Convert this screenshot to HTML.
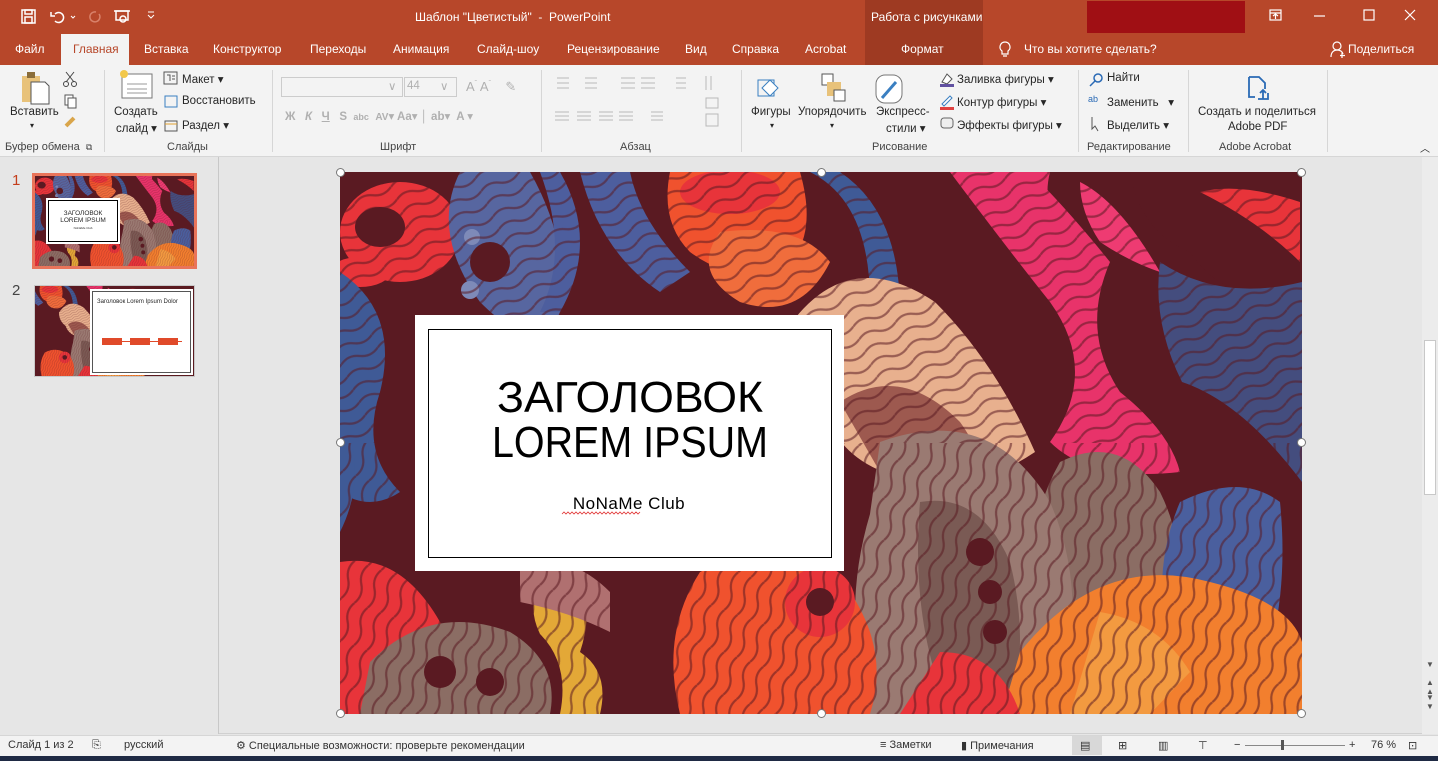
<!DOCTYPE html>
<html><head><meta charset="utf-8"><style>
*{box-sizing:border-box;margin:0;padding:0}
body{width:1438px;height:761px;overflow:hidden;background:#e6e6e6;font-family:"Liberation Sans","DejaVu Sans",sans-serif;font-size:12px;color:#262626;position:relative}
.abs{position:absolute}
#title{left:0;top:0;width:1438px;height:65px;background:#b7472a}
.tt{color:#fff;font-size:12px;position:absolute;white-space:nowrap}
.tab{color:#fff;font-size:12px;position:absolute;top:42px;white-space:nowrap}
#ribbon{left:0;top:65px;width:1438px;height:92px;background:#f3f3f3;border-bottom:1px solid #d6d6d6}
.rt{position:absolute;font-size:11.5px;color:#262626;white-space:nowrap}
.gl{position:absolute;top:141px;font-size:11px;color:#444;white-space:nowrap}
.sep{position:absolute;top:70px;width:1px;height:82px;background:#d6d6d6}
.dis{color:#b0b0b0}
.st{position:absolute;top:739px;font-size:11px;color:#333;white-space:nowrap}
.h{position:absolute;width:9px;height:9px;border-radius:50%;background:#fff;border:1px solid #777}
</style></head><body>
<div id="title" class="abs"></div>
<div class="abs" style="left:865px;top:0;width:118px;height:65px;background:#9e3a22"></div>
<div class="abs" style="left:1087px;top:1px;width:158px;height:32px;background:#a00f14"></div>
<svg class="abs" style="left:18px;top:6px" width="150" height="22" viewBox="0 0 150 22" fill="none" stroke="#fff" stroke-width="1.5">
<rect x="4" y="4" width="13" height="13"/><rect x="7" y="4" width="7" height="4"/><rect x="7" y="11" width="7" height="6"/>
<path d="M37 8 a5 5 0 1 1 0 7 M33 6 v4 h4"/><path d="M53 10 l2 2 l2-2" stroke-width="1"/>
<path d="M78 6 a5 5 0 1 0 3 2" stroke="#d9826b"/>
<rect x="98" y="5" width="12" height="9"/><circle cx="105" cy="13" r="3"/><path d="M96 5h16"/>
<path d="M130 9 l3 3 l3-3 M130 6h6" stroke-width="1"/>
</svg>
<div class="tt" style="left:415px;top:10px">Шаблон "Цветистый"&nbsp; -&nbsp; PowerPoint</div>
<div class="tt" style="left:871px;top:10px">Работа с рисунками</div>
<svg class="abs" style="left:1262px;top:6px" width="170" height="20" fill="none" stroke="#fff" stroke-width="1.2">
<rect x="8" y="4" width="11" height="10"/><path d="M8 7h11 M13.5 13v-5 M11 10l2.5-2 2.5 2"/>
<path d="M52 10h11"/><rect x="102" y="4" width="10" height="10"/><path d="M143 4l10 10 M153 4l-10 10"/>
</svg>
<div class="abs" style="left:61px;top:34px;width:68px;height:32px;background:#f3f3f3"></div>
<div class="tab" style="left:15px">Файл</div>
<div class="tab" style="left:73px;color:#b7472a">Главная</div>
<div class="tab" style="left:144px">Вставка</div>
<div class="tab" style="left:213px">Конструктор</div>
<div class="tab" style="left:310px">Переходы</div>
<div class="tab" style="left:393px">Анимация</div>
<div class="tab" style="left:477px">Слайд-шоу</div>
<div class="tab" style="left:567px">Рецензирование</div>
<div class="tab" style="left:685px">Вид</div>
<div class="tab" style="left:732px">Справка</div>
<div class="tab" style="left:805px">Acrobat</div>
<div class="tab" style="left:901px">Формат</div>
<svg class="abs" style="left:998px;top:40px" width="14" height="18" fill="none" stroke="#fff" stroke-width="1.2"><path d="M7 2a5 5 0 0 0-3 9v3h6v-3a5 5 0 0 0-3-9z M5 16h4"/></svg>
<div class="tab" style="left:1024px">Что вы хотите сделать?</div>
<svg class="abs" style="left:1330px;top:40px" width="16" height="18" fill="none" stroke="#fff" stroke-width="1.2"><circle cx="7" cy="6" r="4"/><path d="M1 17c0-5 3-7 6-7s5 1 6 4 M12 13v5 M10 15.5h5"/></svg>
<div class="tab" style="left:1348px">Поделиться</div>
<div id="ribbon" class="abs"></div>
<div class="sep" style="left:104px"></div><div class="sep" style="left:272px"></div><div class="sep" style="left:541px"></div><div class="sep" style="left:741px"></div><div class="sep" style="left:1078px"></div><div class="sep" style="left:1188px"></div><div class="sep" style="left:1327px"></div>
<svg class="abs" style="left:20px;top:70px" width="80" height="62">
<rect x="2" y="6" width="18" height="26" fill="#e8c27a"/><rect x="7" y="2" width="8" height="6" fill="#8a6d3a"/><path d="M11 12h14l4 4v18h-18z" fill="#fff" stroke="#555"/>
<path d="M46 2l8 10 M54 2l-8 10" stroke="#444"/><circle cx="46" cy="14" r="2.5" fill="none" stroke="#444"/><circle cx="54" cy="14" r="2.5" fill="none" stroke="#444"/>
<rect x="45" y="25" width="8" height="10" fill="#fff" stroke="#555"/><rect x="48" y="28" width="8" height="10" fill="#fff" stroke="#555"/>
<path d="M46 56l8-8" stroke="#d9a54a" stroke-width="4"/>
</svg>
<div class="rt" style="left:10px;top:106px">Вставить</div><div class="rt" style="left:30px;top:121px;font-size:8px">▾</div>
<svg class="abs" style="left:118px;top:70px" width="40" height="30"><rect x="4" y="4" width="30" height="24" fill="#fff" stroke="#777"/><path d="M9 14h20M9 19h20M9 23h20" stroke="#999"/><circle cx="6" cy="4" r="4" fill="#f2c84b"/></svg>
<div class="rt" style="left:114px;top:106px">Создать</div><div class="rt" style="left:116px;top:121px">слайд ▾</div>
<svg class="abs" style="left:163px;top:71px" width="16" height="64" fill="none" stroke="#555"><rect x="1" y="1" width="13" height="12"/><path d="M4 4h3v6 M9 5h3 M9 8h3"/><rect x="2" y="25" width="12" height="11" stroke="#3a7fc1"/><rect x="2" y="50" width="12" height="10"/><path d="M2 53h12" stroke="#e0a030"/></svg>
<div class="rt" style="left:182px;top:72px">Макет ▾</div>
<div class="rt" style="left:182px;top:95px">Восстановить</div>
<div class="rt" style="left:182px;top:118px">Раздел ▾</div>
<div class="abs" style="left:281px;top:77px;width:122px;height:20px;border:1px solid #ccc;background:#f3f3f3"></div>
<div class="abs" style="left:404px;top:77px;width:53px;height:20px;border:1px solid #ccc;background:#f3f3f3"></div>
<div class="rt dis" style="left:407px;top:80px">44</div>
<div class="rt dis" style="left:388px;top:79px">∨</div><div class="rt dis" style="left:440px;top:79px">∨</div>
<div class="rt dis" style="left:466px;top:79px;font-size:13px">A<sup style="font-size:7px">ˆ</sup> A<sup style="font-size:7px">ˇ</sup>&nbsp;&nbsp;&nbsp;&nbsp;✎</div>
<div class="rt dis" style="left:285px;top:109px;font-weight:bold;letter-spacing:0">Ж&nbsp;&nbsp; <i>К</i>&nbsp;&nbsp; <u>Ч</u>&nbsp;&nbsp; S&nbsp; <span style="font-size:9px">abc</span>&nbsp; <span style="font-size:10px">AV</span>▾ Aa▾ │ ab▾&nbsp; A ▾</div>
<svg class="abs" style="left:551px;top:74px" width="180" height="60" stroke="#b8b8b8" fill="none">
<path d="M6 4h12M6 9h12M6 14h12 M34 4h12M34 9h12M34 14h12 M70 4h14M70 9h14M70 14h14 M90 4h14M90 9h14M90 14h14 M125 4h10M125 9h10M125 14h10 M155 2v14M160 2v14"/>
<path d="M4 38h14M4 42h14M4 46h14 M26 38h14M26 42h14M26 46h14 M48 38h14M48 42h14M48 46h14 M68 38h14M68 42h14M68 46h14 M100 38h12M100 42h12M100 46h12 M155 24h12v10h-12z M155 40h12v12h-12z"/>
</svg>
<svg class="abs" style="left:752px;top:72px" width="180" height="36" fill="none">
<rect x="6" y="8" width="16" height="16" stroke="#3a7fc1"/><path d="M18 8 l8 8 -8 8 -8-8z" fill="#fff" stroke="#3a7fc1"/>
<rect x="70" y="2" width="11" height="11" fill="#fff" stroke="#555"/><rect x="75" y="10" width="14" height="14" fill="#e8c27a"/><rect x="82" y="18" width="11" height="11" fill="#fff" stroke="#555"/>
<rect x="124" y="3" width="26" height="28" rx="9" fill="#fff" stroke="#777"/><path d="M144 10l-14 16" stroke="#3a7fc1" stroke-width="3"/>
</svg>
<div class="rt" style="left:751px;top:106px">Фигуры</div><div class="rt" style="left:770px;top:121px;font-size:8px">▾</div>
<div class="rt" style="left:798px;top:106px">Упорядочить</div><div class="rt" style="left:830px;top:121px;font-size:8px">▾</div>
<div class="rt" style="left:876px;top:106px">Экспресс-</div><div class="rt" style="left:886px;top:121px">стили ▾</div>
<svg class="abs" style="left:938px;top:70px" width="18" height="64"><path d="M4 12l5-8 5 5-5 5z" fill="#fff" stroke="#555"/><rect x="2" y="14" width="14" height="3" fill="#6050a0"/><path d="M4 34l8-8 2 2-8 8z" fill="#fff" stroke="#3a7fc1"/><rect x="2" y="37" width="14" height="3" fill="#e04040"/><rect x="3" y="48" width="12" height="10" rx="3" fill="#eee" stroke="#666"/></svg>
<div class="rt" style="left:957px;top:72px">Заливка фигуры ▾</div>
<div class="rt" style="left:957px;top:95px">Контур фигуры ▾</div>
<div class="rt" style="left:957px;top:118px">Эффекты фигуры ▾</div>
<svg class="abs" style="left:1088px;top:72px" width="18" height="62" fill="none" stroke="#2a6ab5" stroke-width="1.5"><circle cx="10" cy="6" r="4"/><path d="M7 9l-5 5"/><text x="0" y="30" font-size="9" fill="#2a6ab5" stroke="none" font-family="Liberation Sans">ab</text><path d="M4 45l0 12 3-3 3 5" stroke="#555" stroke-width="1"/></svg>
<div class="rt" style="left:1107px;top:72px">Найти</div>
<div class="rt" style="left:1107px;top:95px">Заменить &nbsp;&nbsp;▾</div>
<div class="rt" style="left:1107px;top:118px">Выделить ▾</div>
<svg class="abs" style="left:1245px;top:75px" width="26" height="28" fill="none" stroke="#2a6ab5" stroke-width="1.8"><path d="M4 2h10l6 6v6 M4 2v20h6 M13 24h10v-6 M18 24v-9 M15 18l3-3 3 3"/></svg>
<div class="rt" style="left:1198px;top:106px">Создать и поделиться</div>
<div class="rt" style="left:1228px;top:121px">Adobe PDF</div>
<div class="gl" style="left:5px">Буфер обмена&nbsp; <span style="font-size:9px">⧉</span></div>
<div class="gl" style="left:167px">Слайды</div>
<div class="gl" style="left:380px">Шрифт</div>
<div class="gl" style="left:620px">Абзац</div>
<div class="gl" style="left:872px">Рисование</div>
<div class="gl" style="left:1087px">Редактирование</div>
<div class="gl" style="left:1219px">Adobe Acrobat</div>
<div class="rt" style="left:1420px;top:140px;font-size:10px">︿</div>
<div class="abs" style="left:218px;top:157px;width:1px;height:577px;background:#c8c8c8"></div>
<div class="abs" style="left:12px;top:172px;color:#c43e1c;font-size:15px">1</div>
<div class="abs" style="left:12px;top:282px;color:#444;font-size:15px">2</div>
<div class="abs" style="left:32px;top:173px;width:165px;height:96px;border:3px solid #e9745a;overflow:hidden;background:#5a1a1f">
<svg width="159" height="90" viewBox="0 0 962 542" preserveAspectRatio="none"><use href="#pat"/></svg>
<div class="abs" style="left:13px;top:24px;width:70px;height:42px;background:#fff;border:1px solid #000;outline:2px solid #fff;font-size:6.5px;text-align:center;padding-top:9px;line-height:7px">ЗАГОЛОВОК<br>LOREM IPSUM<br><span style="font-size:3px">NoNaMe Club</span></div>
</div>
<div class="abs" style="left:34px;top:285px;width:161px;height:92px;border:1px solid #c8c8c8;overflow:hidden;background:#5a1a1f">
<svg width="159" height="90" viewBox="0 0 962 542" preserveAspectRatio="none"><g transform="translate(-300,0)"><use href="#pat"/></g></svg>
<div class="abs" style="left:57px;top:5px;width:99px;height:82px;background:#fff;border:1px solid #555;outline:2px solid #fff;font-size:6px;padding:7px 4px;line-height:7px">Заголовок Lorem Ipsum Dolor
<div class="abs" style="left:9px;top:49px;width:80px;height:1px;background:#e04a2a"></div>
<div class="abs" style="left:9px;top:46px;width:20px;height:7px;background:#e04a2a"></div>
<div class="abs" style="left:37px;top:46px;width:20px;height:7px;background:#e04a2a"></div>
<div class="abs" style="left:65px;top:46px;width:20px;height:7px;background:#e04a2a"></div></div>
</div>
<svg class="abs" style="left:340px;top:172px" width="962" height="542" viewBox="0 0 962 542">
<defs>
<pattern id="lines" width="40" height="14" patternUnits="userSpaceOnUse" patternTransform="rotate(-25)">
<path d="M0 7 q10-6 20 0 t20 0" fill="none" stroke="#5a1a22" stroke-width="2.2"/></pattern>
<pattern id="lines2" width="14" height="40" patternUnits="userSpaceOnUse" patternTransform="rotate(20)">
<path d="M7 0 q-6 10 0 20 t0 20" fill="none" stroke="#5a1a22" stroke-width="2.2"/></pattern>
<g id="pat">
<rect width="962" height="542" fill="#5a1a22"/>
<ellipse cx="60" cy="60" rx="60" ry="50" fill="#e8343a"/><ellipse cx="40" cy="55" rx="25" ry="20" fill="#5a1a22"/>
<ellipse cx="20" cy="100" rx="30" ry="15" fill="#e8343a"/>
<path d="M0 100 q60 40 40 120 q-20 60 20 100 q-30 20-60 0z" fill="#3f5a96"/>
<path d="M120 0 q-30 60 20 130 q60 60 80 10 q10-70-30-140z" fill="#5766a0"/>
<path d="M200 0 q30 80 0 140 l20 0 q40-70 0-140z" fill="#4d5e9e"/>
<circle cx="150" cy="90" r="20" fill="#5a1a22"/><circle cx="132" cy="65" r="8" fill="#7e8ab8"/><circle cx="130" cy="118" r="9" fill="#7e8ab8"/>
<path d="M240 0 q20 80 80 120 l30-20 q-50-50-60-100z" fill="#4d5e9e"/>
<path d="M330 0 q-10 50 20 80 q40 30 90 20 q40-30 20-100z" fill="#f0522e"/>
<ellipse cx="390" cy="20" rx="50" ry="22" fill="#e8343a"/>
<path d="M380 60 q-30 40 20 70 q60 20 90-40 q-30-40-110-30z" fill="#f06d3c"/>
<path d="M470 0 q60 30 60 130 l30 10 q0-100-60-140z" fill="#3f5a96"/>
<path d="M445 160 q60-90 150-30 q60 60 100 150 q-60 40-110 30 q-80-10-100-70 q-40-30-40-80z" fill="#e8b08e"/>
<path d="M500 230 q60-40 120 20 q30 40 10 80 q-60 0-90-30z" fill="#6a2024" opacity=".6"/>
<path d="M610 0 q60 80 100 130 q50 70 0 140 q40 40 130 30 q-10-40-60-80 q-40-60-10-130 q-40-50-80-90z" fill="#e8336a"/>
<path d="M740 10 q40 20 80 90 q-30-10-60-30 q-20-30-20-60z" fill="#ee3b72"/>
<path d="M650 0 h60 q-10 40 20 60 l-30 10 q-40-30-50-70z" fill="#e8336a"/>
<path d="M790 0 q10 60 60 80 q40 60 110 30 v-110z" fill="#5a1a22"/>
<path d="M860 20 q40-10 100 10 v60 q-40-40-100-70z" fill="#e8343a"/>
<path d="M820 90 q60 40 142 20 v200 q-60-80-120-100 q-30-60-22-120z" fill="#3f5a96" opacity=".8"/>
<path d="M720 290 q60-30 100 30 q40 80-10 160 q-60 20-110-40 q-20-80 20-150z" fill="#8b6d64"/>
<path d="M840 330 q60-30 100 0 q10 100-20 180 q-60 10-90-30 q-20-80 10-150z" fill="#4a5f9e"/>
<path d="M540 270 q110-40 170 60 q40 90 10 212 h-190 q-30-100 0-200z" fill="#9a7a72"/>
<path d="M580 330 q60-10 90 60 q20 80 0 152 h-60 q-40-90-30-212z" fill="#7a5a54"/>
<circle cx="640" cy="380" r="14" fill="#5a1a22"/><circle cx="650" cy="420" r="12" fill="#5a1a22"/><circle cx="655" cy="460" r="12" fill="#5a1a22"/>
<path d="M360 400 q80-40 150 20 q40 60 20 122 h-190 q-20-80 20-142z" fill="#f0522e"/>
<circle cx="480" cy="430" r="35" fill="#e8343a"/><circle cx="480" cy="430" r="14" fill="#5a1a22"/>
<path d="M220 380 q40 40 20 100 q30 20 20 62 h-40 q10-50-20-80 q-20-40 20-82z" fill="#f2b83a" opacity=".9"/>
<path d="M0 390 q60-10 100 60 q30 50 20 92 h-120z" fill="#e8343a"/>
<path d="M30 490 q60-60 140-30 q50 30 40 82 h-190z" fill="#8b6d64"/>
<circle cx="100" cy="500" r="16" fill="#5a1a22"/><circle cx="150" cy="510" r="14" fill="#5a1a22"/>
<path d="M180 390 q50-10 90 30 v40 q-40-20-90-30z" fill="#b07070"/>
<path d="M680 480 q80-100 190-70 q80 20 92 60 v72 h-300z" fill="#f27f2e"/>
<path d="M760 440 q60 10 90 60 l-40 42 h-80z" fill="#f39a40"/>
<path d="M600 480 q60 0 80 62 h-120z" fill="#e8343a"/>
<path d="M0 240 q30 60 0 120z" fill="#3f5a96"/>
<rect width="962" height="271" fill="url(#lines)" opacity=".55"/>
<rect y="271" width="962" height="271" fill="url(#lines2)" opacity=".55"/>
</g></defs>
<use href="#pat"/>
<rect x="75" y="143" width="429" height="256" fill="#fff"/>
<rect x="88.5" y="157.5" width="403" height="228" fill="none" stroke="#000" stroke-width="1"/>
<text x="290" y="240" text-anchor="middle" font-family="Liberation Sans" font-size="44" fill="#000" textLength="266" lengthAdjust="spacingAndGlyphs">ЗАГОЛОВОК</text>
<text x="290" y="285" text-anchor="middle" font-family="Liberation Sans" font-size="44" fill="#000" textLength="276" lengthAdjust="spacingAndGlyphs">LOREM IPSUM</text>
<text x="289" y="337" text-anchor="middle" font-family="Liberation Sans" font-size="17" fill="#000" letter-spacing="0.5">NoNaMe Club</text>
<path d="M222 342 l2 -2 2 2 2-2 2 2 2-2 2 2 2-2 2 2 2-2 2 2 2-2 2 2 2-2 2 2 2-2 2 2 2-2 2 2 2-2 2 2 2-2 2 2 2-2 2 2 2-2 2 2 2-2 2 2 2-2 2 2 2-2 2 2 2-2 2 2 2-2 2 2 2-2 2 2 2-2" fill="none" stroke="#e03030" stroke-width=".8"/>
</svg>
<div class="h" style="left:336px;top:168px"></div><div class="h" style="left:817px;top:168px"></div><div class="h" style="left:1297px;top:168px"></div>
<div class="h" style="left:336px;top:438px"></div><div class="h" style="left:1297px;top:438px"></div>
<div class="h" style="left:336px;top:709px"></div><div class="h" style="left:817px;top:709px"></div><div class="h" style="left:1297px;top:709px"></div>
<div class="abs" style="left:1422px;top:157px;width:16px;height:577px;background:#ececec"></div>
<div class="abs" style="left:1424px;top:340px;width:12px;height:155px;background:#fff;border:1px solid #c8c8c8"></div>
<div class="abs" style="left:1426px;top:660px;font-size:8px;color:#555">▼</div>
<div class="abs" style="left:1426px;top:678px;font-size:8px;color:#555;line-height:9px">▲<br>▲</div>
<div class="abs" style="left:1426px;top:693px;font-size:8px;color:#555;line-height:9px">▼<br>▼</div>
<div class="abs" style="left:219px;top:733px;width:1203px;height:1px;background:#d0d0d0"></div>
<div class="abs" style="left:0;top:735px;width:1438px;height:21px;background:#f3f3f3;border-top:1px solid #d6d6d6"></div>
<div class="st" style="left:8px">Слайд 1 из 2</div>
<div class="st" style="left:92px">⎘</div>
<div class="st" style="left:124px">русский</div>
<div class="st" style="left:236px">⚙ Специальные возможности: проверьте рекомендации</div>
<div class="st" style="left:880px">≡ Заметки</div>
<div class="st" style="left:961px">▮ Примечания</div>
<div class="abs" style="left:1072px;top:736px;width:30px;height:19px;background:#d8d8d8"></div>
<div class="st" style="left:1080px">▤</div><div class="st" style="left:1118px">⊞</div><div class="st" style="left:1158px">▥</div><div class="st" style="left:1198px">⊤</div>
<div class="st" style="left:1234px">−</div>
<div class="abs" style="left:1245px;top:745px;width:100px;height:1px;background:#888"></div>
<div class="abs" style="left:1281px;top:740px;width:3px;height:10px;background:#555"></div>
<div class="st" style="left:1349px">+</div>
<div class="st" style="left:1371px">76 %</div>
<div class="st" style="left:1408px">⊡</div>
<div class="abs" style="left:0;top:756px;width:1438px;height:5px;background:#1f2a44"></div>
</body></html>
